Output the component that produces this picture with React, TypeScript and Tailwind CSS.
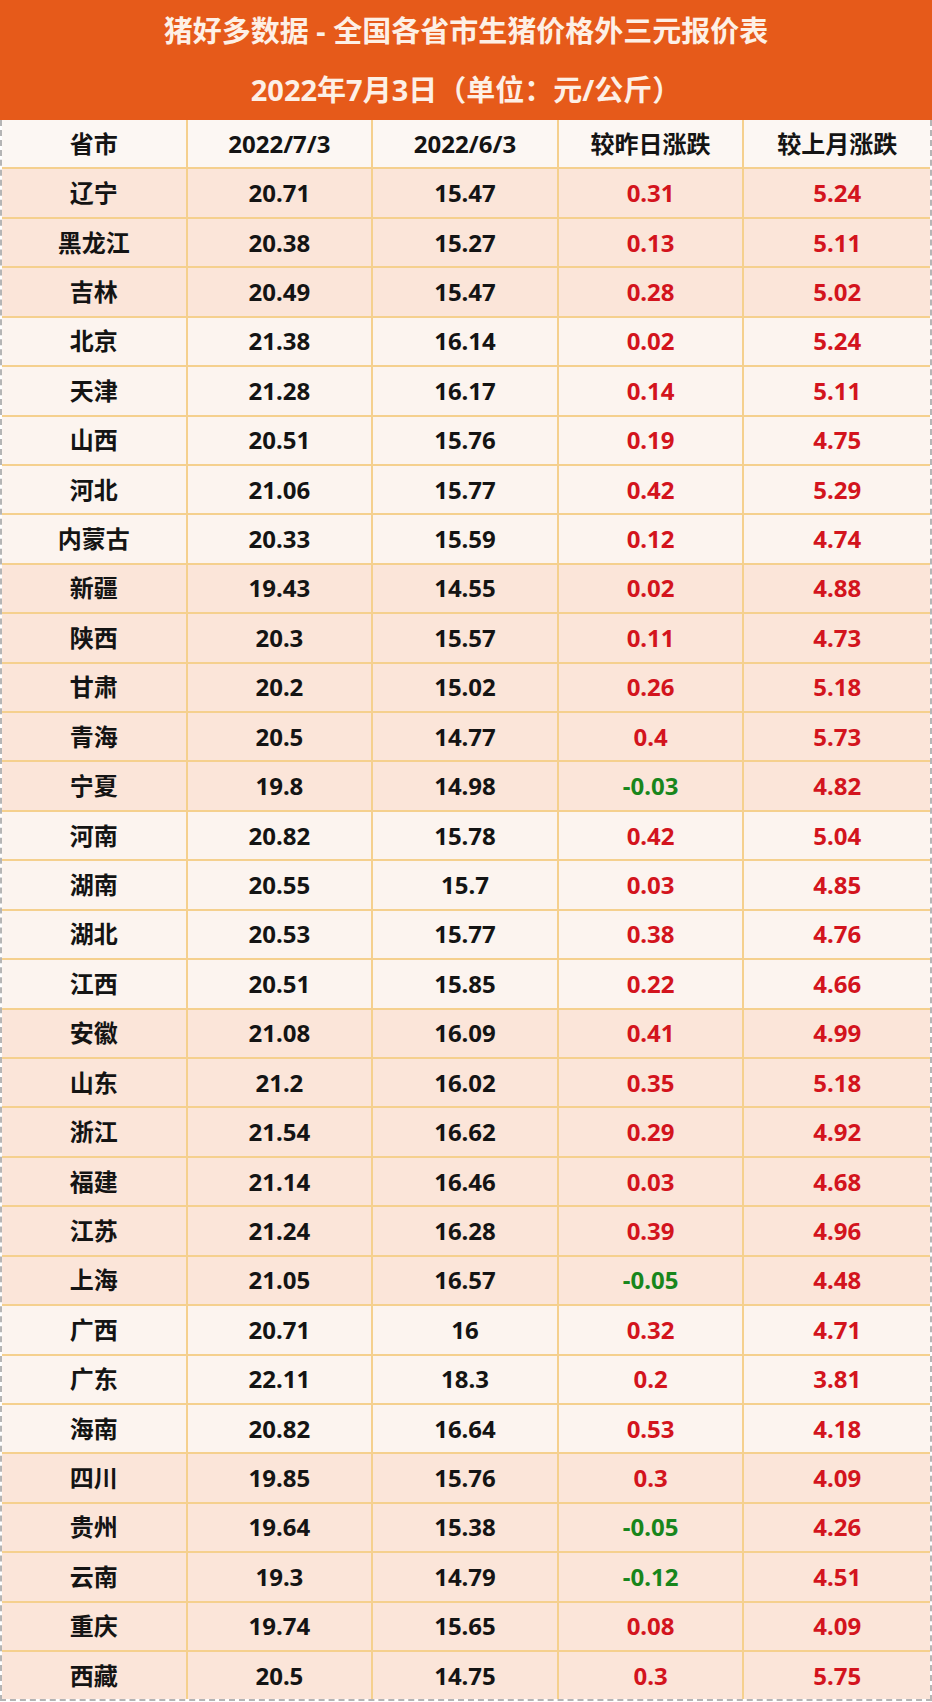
const rows: [string, string, string, string, string, 'pink' | 'light'][] = [
  ['辽宁', '20.71', '15.47', '0.31', '5.24', 'pink'],
  ['黑龙江', '20.38', '15.27', '0.13', '5.11', 'pink'],
  ['吉林', '20.49', '15.47', '0.28', '5.02', 'pink'],
  ['北京', '21.38', '16.14', '0.02', '5.24', 'light'],
  ['天津', '21.28', '16.17', '0.14', '5.11', 'light'],
  ['山西', '20.51', '15.76', '0.19', '4.75', 'light'],
  ['河北', '21.06', '15.77', '0.42', '5.29', 'light'],
  ['内蒙古', '20.33', '15.59', '0.12', '4.74', 'light'],
  ['新疆', '19.43', '14.55', '0.02', '4.88', 'pink'],
  ['陕西', '20.3', '15.57', '0.11', '4.73', 'pink'],
  ['甘肃', '20.2', '15.02', '0.26', '5.18', 'pink'],
  ['青海', '20.5', '14.77', '0.4', '5.73', 'pink'],
  ['宁夏', '19.8', '14.98', '-0.03', '4.82', 'pink'],
  ['河南', '20.82', '15.78', '0.42', '5.04', 'light'],
  ['湖南', '20.55', '15.7', '0.03', '4.85', 'light'],
  ['湖北', '20.53', '15.77', '0.38', '4.76', 'light'],
  ['江西', '20.51', '15.85', '0.22', '4.66', 'light'],
  ['安徽', '21.08', '16.09', '0.41', '4.99', 'pink'],
  ['山东', '21.2', '16.02', '0.35', '5.18', 'pink'],
  ['浙江', '21.54', '16.62', '0.29', '4.92', 'pink'],
  ['福建', '21.14', '16.46', '0.03', '4.68', 'pink'],
  ['江苏', '21.24', '16.28', '0.39', '4.96', 'pink'],
  ['上海', '21.05', '16.57', '-0.05', '4.48', 'pink'],
  ['广西', '20.71', '16', '0.32', '4.71', 'light'],
  ['广东', '22.11', '18.3', '0.2', '3.81', 'light'],
  ['海南', '20.82', '16.64', '0.53', '4.18', 'light'],
  ['四川', '19.85', '15.76', '0.3', '4.09', 'pink'],
  ['贵州', '19.64', '15.38', '-0.05', '4.26', 'pink'],
  ['云南', '19.3', '14.79', '-0.12', '4.51', 'pink'],
  ['重庆', '19.74', '15.65', '0.08', '4.09', 'pink'],
  ['西藏', '20.5', '14.75', '0.3', '5.75', 'pink'],
];

const cell = 'flex items-center justify-center border-r-2 border-[#f5d08e] last:border-r-0';

export default function App() {
  return (
    <div
      className="w-[932px] bg-white font-bold text-[#141414]"
      style={{ fontFamily: '"Noto Sans", "Noto Sans CJK SC", sans-serif' }}
    >
      {/* title band */}
      <div className="flex h-[120px] flex-col items-center bg-[#e65a1a] text-[29px] text-[#fdf0e6]">
        <div className="flex h-[62px] items-center">猪好多数据 - 全国各省市生猪价格外三元报价表</div>
        <div className="flex h-[58px] items-center pb-[2px]">2022年7月3日（单位：元/公斤）</div>
      </div>

      <div className="border-x-2 border-b-2 border-dashed border-[#b5b5b5] text-[24px]">
        <div className="grid h-[49.4px] grid-cols-5 border-b-2 border-[#f5d08e] bg-[#fcf7f3]">
          <div className={cell}>省市</div>
          <div className={cell}>2022/7/3</div>
          <div className={cell}>2022/6/3</div>
          <div className={cell}>较昨日涨跌</div>
          <div className={cell}>较上月涨跌</div>
        </div>
        {rows.map(([name, a, b, d, m, tone], i) => (
          <div
            key={name}
            className={`grid grid-cols-5 ${i < rows.length - 1 ? 'h-[49.43px] border-b-2 border-[#f5d08e]' : 'h-[47px]'} ${
              tone === 'pink' ? 'bg-[#fbe5d9]' : 'bg-[#fcf4ef]'
            }`}
          >
            <div className={cell}>{name}</div>
            <div className={cell}>{a}</div>
            <div className={cell}>{b}</div>
            <div className={`${cell} ${d.startsWith('-') ? 'text-[#18861c]' : 'text-[#d3141d]'}`}>{d}</div>
            <div className={`${cell} text-[#d3141d]`}>{m}</div>
          </div>
        ))}
      </div>
    </div>
  );
}
